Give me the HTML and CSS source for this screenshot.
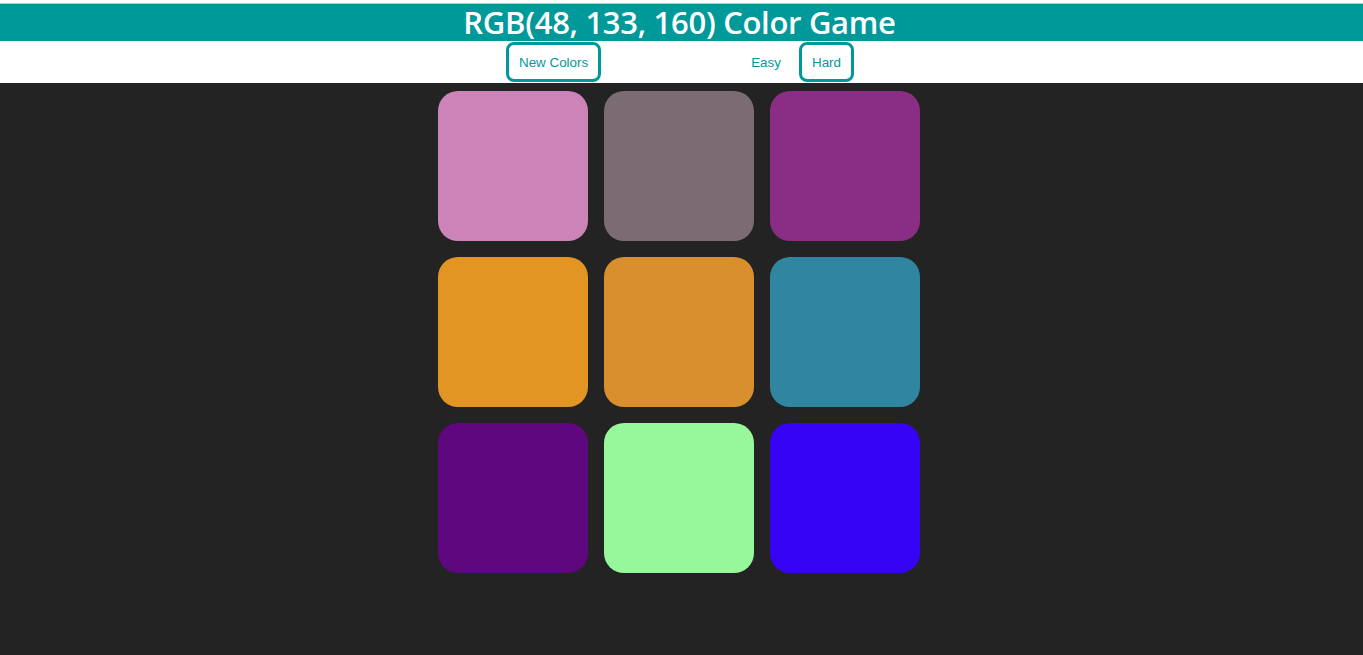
FILE: index.html
```html
<!DOCTYPE html>
<html lang="en">
<head>
<meta charset="utf-8">
<title>Color Game</title>
<link rel="stylesheet" href="styles.css">
</head>
<body>
  <div class="page">
    <h1 class="title">RGB(48, 133, 160) Color Game</h1>
    <div class="stripe">
      <button class="btn btn-outlined">New Colors</button>
      <span class="message"></span>
      <button class="btn">Easy</button>
      <button class="btn btn-outlined">Hard</button>
    </div>
    <div class="board">
      <div class="square sq-1"></div>
      <div class="square sq-2"></div>
      <div class="square sq-3"></div>
      <div class="square sq-4"></div>
      <div class="square sq-5"></div>
      <div class="square sq-6"></div>
      <div class="square sq-7"></div>
      <div class="square sq-8"></div>
      <div class="square sq-9"></div>
    </div>
  </div>
</body>
</html>
```

FILE: styles.css
```css
html, body {
  margin: 0;
  padding: 0;
  height: 100%;
}
body {
  background: #232323;
  font-family: "Liberation Sans", Arial, sans-serif;
}
.page {
  min-height: 100%;
  display: flex;
  flex-direction: column;
  background: #232323;
  padding-top: 3px;
  box-sizing: border-box;
  background-image: linear-gradient(#ffffff, #ffffff);
  background-size: 100% 3px;
  background-repeat: no-repeat;
}
.title {
  margin: 0;
  height: 38px;
  border-top: 1px solid #c4c4c4;
  box-sizing: border-box;
  background: #009999;
  color: #ffffff;
  font-family: "Open Sans", "Noto Sans", sans-serif;
  font-weight: 600;
  font-size: 31px;
  line-height: 37px;
  text-align: center;
  padding-right: 4px;
  letter-spacing: -0.3px;
}
.stripe {
  height: 42px;
  background: #ffffff;
  display: flex;
  justify-content: center;
  align-items: center;
  gap: 5px;
  padding-right: 3px;
}
.message {
  width: 127px;
}
.btn {
  height: 40px;
  box-sizing: border-box;
  padding: 0 10px;
  border: 3px solid transparent;
  border-radius: 8px;
  background: #ffffff;
  color: #009999;
  font-family: "Liberation Sans", Arial, sans-serif;
  font-size: 13.4px;
  cursor: pointer;
}
.btn-outlined {
  border-color: #009999;
}
.board {
  display: grid;
  grid-template-columns: repeat(3, 150px);
  grid-auto-rows: 150px;
  gap: 16px;
  justify-content: center;
  padding-top: 8px;
  padding-right: 5px;
}
.square {
  border-radius: 20px;
}
.sq-1 { background: rgb(203, 131, 184); }
.sq-2 { background: rgb(123, 108, 116); }
.sq-3 { background: rgb(138, 45, 133); }
.sq-4 { background: rgb(226, 149, 34); }
.sq-5 { background: rgb(217, 143, 46); }
.sq-6 { background: rgb(48, 133, 160); }
.sq-7 { background: rgb(94, 7, 126); }
.sq-8 { background: rgb(150, 247, 155); }
.sq-9 { background: rgb(54, 3, 245); }
```
